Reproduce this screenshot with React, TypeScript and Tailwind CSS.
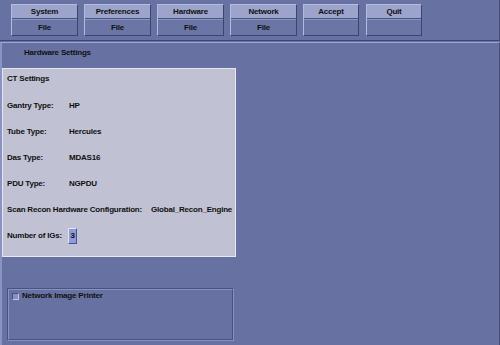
import React from "react";

const font = { fontFamily: '"Liberation Sans", Arial, sans-serif' };

function TopButton({ label, sub, w }: { label: string; sub: string; w: string }) {
  return (
    <div className={`${w} h-[32px] flex flex-col border border-t-[#b4bbe0] border-l-[#b4bbe0] border-r-[#3c4470] border-b-[#3c4470] bg-[#6c76a6]`}>
      <div className="h-[14px] bg-[#9ca4cc] border-b border-b-[#4a5280] flex items-center justify-center leading-none">
        {label}
      </div>
      <div className="flex-1 flex items-center justify-center leading-none border-t border-t-[#8c94c0]">
        {sub}
      </div>
    </div>
  );
}

function Row({ label, value, valueX }: { label: string; value: React.ReactNode; valueX?: string }) {
  return (
    <div className="h-[26px] flex items-center whitespace-nowrap">
      <div className={`${valueX ?? "w-[62px]"} shrink-0`}>{label}</div>
      <div>{value}</div>
    </div>
  );
}

export default function App() {
  return (
    <div style={font} className="w-[500px] h-[345px] bg-[#6872a2] flex flex-col overflow-hidden text-[8px] tracking-[-0.2px] font-bold text-[#101010] whitespace-nowrap">
      <div className="h-[41px] shrink-0 flex items-start pl-[11px] pt-[4px] gap-[6px] border-b border-b-[#3e4672] border-r border-r-[#464e7c]">
        <TopButton label="System" sub="File" w="w-[67px]" />
        <TopButton label="Preferences" sub="File" w="w-[67px]" />
        <TopButton label="Hardware" sub="File" w="w-[67px]" />
        <TopButton label="Network" sub="File" w="w-[67px]" />
        <TopButton label="Accept" sub="" w="w-[56px]" />
        <div className="ml-[1px]">
          <TopButton label="Quit" sub="" w="w-[56px]" />
        </div>
      </div>
      <div className="flex-1 flex flex-col border-t border-t-[#9ea6d2] border-l-2 border-l-[#8a93c4] border-r border-r-[#464e7c] mt-[1px]">
        <div className="h-[25px] flex items-center pb-[5px] pl-[22px]">Hardware Settings</div>
        <div className="w-[234px] h-[189px] bg-[#c0c2d3] border border-t-[#e4e6f0] border-l-[#e4e6f0] border-r-[#e8e8f0] border-b-[#e8e8f0] pl-[4px]">
          <div className="h-[19px] flex items-center">CT Settings</div>
          <div className="mt-[5px]">
            <Row label="Gantry Type:" value="HP" />
            <Row label="Tube Type:" value="Hercules" />
            <Row label="Das Type:" value="MDAS16" />
            <Row label="PDU Type:" value="NGPDU" />
            <Row label="Scan Recon Hardware Configuration:" value="Global_Recon_Engine" valueX="w-[144px]" />
            <div className="h-[26px] flex items-center">
              <span className="w-[61px] shrink-0">Number of IGs:</span>
              <span className="w-[9px] h-[16px] bg-[#8f9ad6] border border-t-[#e0e4f8] border-l-[#e0e4f8] border-r-[#4a5490] border-b-[#4a5490] flex items-center justify-center">3</span>
            </div>
          </div>
        </div>
        <div className="ml-[5px] mt-[31px] w-[227px] h-[53px] border border-t-[#4a5282] border-l-[#4a5282] border-r-[#8a92c0] border-b-[#8a92c0]">
          <div className="h-full border border-t-[#8a92c0] border-l-[#8a92c0] border-r-[#4a5282] border-b-[#4a5282] pl-[3px] pt-[2px]">
            <div className="flex items-center gap-[3px] h-[8px]">
              <span className="w-[7px] h-[7px] bg-[#8890bc] border border-t-[#4a5282] border-l-[#4a5282] border-r-[#c0c6e8] border-b-[#c0c6e8]" />
              <span>Network Image Printer</span>
            </div>
          </div>
        </div>
      </div>
    </div>
  );
}
